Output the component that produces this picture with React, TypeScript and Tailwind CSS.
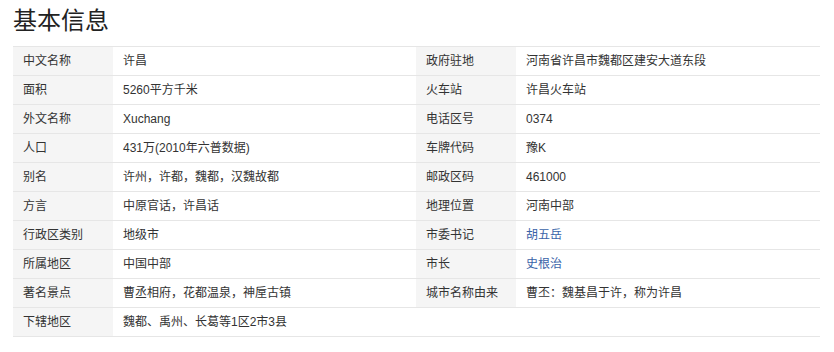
const left: [string, string][] = [
  ['中文名称', '许昌'],
  ['面积', '5260平方千米'],
  ['外文名称', 'Xuchang'],
  ['人口', '431万(2010年六普数据)'],
  ['别名', '许州，许都，魏都，汉魏故都'],
  ['方言', '中原官话，许昌话'],
  ['行政区类别', '地级市'],
  ['所属地区', '中国中部'],
  ['著名景点', '曹丞相府，花都温泉，神垕古镇'],
  ['下辖地区', '魏都、禹州、长葛等1区2市3县'],
];

const right: [string, string, boolean?][] = [
  ['政府驻地', '河南省许昌市魏都区建安大道东段'],
  ['火车站', '许昌火车站'],
  ['电话区号', '0374'],
  ['车牌代码', '豫K'],
  ['邮政区码', '461000'],
  ['地理位置', '河南中部'],
  ['市委书记', '胡五岳', true],
  ['市长', '史根治', true],
  ['城市名称由来', '曹丕：魏基昌于许，称为许昌'],
];

function Row({ label, value, link }: { label: string; value: string; link?: boolean }) {
  return (
    <div className="flex h-[29px] border-b border-[#e6e6e6]">
      <div className="w-[100px] shrink-0 bg-[#f5f5f5] pl-[10px] leading-[28px] text-[#333]">{label}</div>
      <div className={`flex-1 pl-[10px] leading-[28px] ${link ? 'text-[#3a63a8]' : 'text-[#333]'}`}>{value}</div>
    </div>
  );
}

export default function App() {
  return (
    <div
      className="min-h-[352px] bg-white px-[13px] pt-[6px]"
      style={{ fontFamily: '"Liberation Sans", "Noto Sans CJK SC", sans-serif' }}
    >
      <h2 className="mb-[10px] text-[24px] leading-[30px] text-[#222]">基本信息</h2>
      <div className="flex w-[807px] border-t border-[#e6e6e6] text-[12px]">
        <div className="w-[403px]">
          {left.map(([l, v]) => (
            <Row key={l} label={l} value={v} />
          ))}
        </div>
        <div className="w-[404px]">
          {right.map(([l, v, link]) => (
            <Row key={l} label={l} value={v} link={link} />
          ))}
          <div className="h-[29px] border-b border-[#e6e6e6]" />
        </div>
      </div>
    </div>
  );
}
